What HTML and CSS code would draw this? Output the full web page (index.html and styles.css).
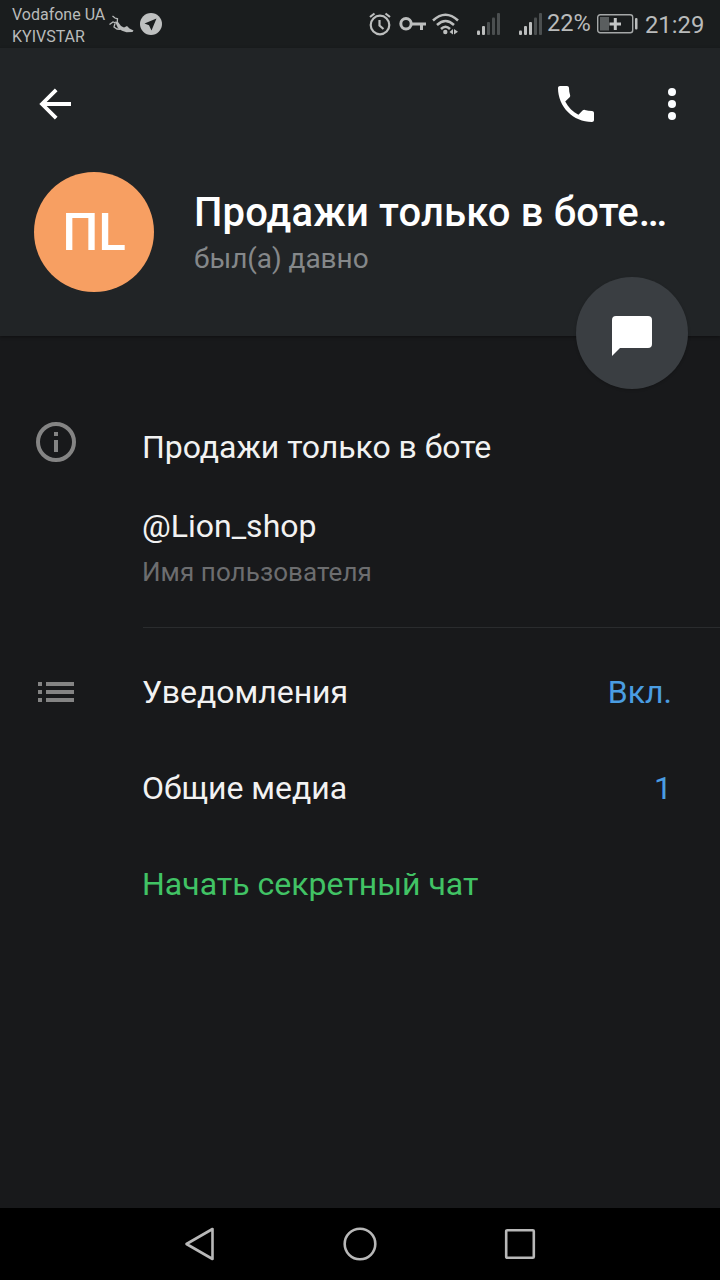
FILE: index.html
```html
<!DOCTYPE html>
<html lang="ru">
<head>
<meta charset="utf-8">
<title>Профиль</title>
<link rel="stylesheet" href="styles.css">
</head>
<body>
<div class="screen">
  <div class="statusbar">
    <div class="carriers"><span>Vodafone UA</span><span>KYIVSTAR</span></div>
    <svg class="runner" width="25" height="20" viewBox="0 0 25 20" fill="none" stroke="#b9bbbb" stroke-width="1.300">
      <path d="M3.500 1l2.500 2 2.500.8-.3 4M.5 9.500L4 7l3 1M6 8.500L5 12l3 2 3.500.3"/>
      <path d="M6 6.500l3 .5 3 4 3 1.500 3-1.500 2.500 2.500 4 2-1 1.500-6 .3-4.500-1.500-4-2.500z" fill="#b9bbbb" stroke="none"/>
    </svg>
    <svg class="telegram" width="22" height="22" viewBox="0 0 22 22">
      <circle cx="11" cy="11" r="11" fill="#bec0c0"/>
      <path d="M16.500 5.500L4.500 10.500 9 12.300 11.500 17.500z" fill="#1a1d1e"/>
    </svg>
    <div class="indicators">
      <svg class="alarm" width="22" height="24" viewBox="0 0 22 24" fill="none" stroke="#bcbebe" stroke-width="2.200">
        <circle cx="11" cy="13" r="9.300"/>
        <path d="M1 5L5.500 1.500M21 5L16.500 1.500M10.500 8v5.500l4 3.500"/>
      </svg>
      <svg class="key" width="27" height="14" viewBox="0 0 27 14" fill="none" stroke="#bcbebe" stroke-width="3">
        <circle cx="7" cy="6.700" r="5.200"/>
        <path d="M12 7h15M22.500 7v6"/>
      </svg>
      <svg class="wifi" width="27" height="22" viewBox="0 0 27 22" fill="none" stroke="#bcbebe" stroke-width="2.500">
        <path d="M1 7.500Q13.500-4 26 7.500M5 12q8.500-8 17 0M9 16q4.500-4.500 9 0"/>
        <circle cx="13.300" cy="19" r="2.200" fill="#bcbebe" stroke="none"/>
        <path d="M17.500 19l3.500-3v5.500zM22 16v5.500l4-2.700z" fill="#bcbebe" stroke="none"/>
      </svg>
      <svg class="signal first" width="24" height="22" viewBox="0 0 24 22" fill="#4b4f50">
        <rect x="0" y="17.500" width="3" height="4.500" rx="1" fill="#bcbebe"/>
        <rect x="5" y="13" width="3" height="9" rx="1" fill="#bcbebe"/>
        <rect x="10" y="9" width="3" height="13" rx="1"/>
        <rect x="15" y="4.500" width="3" height="17.500" rx="1"/>
        <rect x="20" y="0" width="3" height="22" rx="1"/>
      </svg>
      <svg class="signal second" width="24" height="22" viewBox="0 0 24 22" fill="#4b4f50">
        <rect x="0" y="17.500" width="3" height="4.500" rx="1" fill="#bcbebe"/>
        <rect x="5" y="13" width="3" height="9" rx="1" fill="#bcbebe"/>
        <rect x="10" y="9" width="3" height="13" rx="1" fill="#bcbebe"/>
        <rect x="15" y="4.500" width="3" height="17.500" rx="1"/>
        <rect x="20" y="0" width="3" height="22" rx="1"/>
      </svg>
      <span class="percent">22%</span>
      <svg class="battery" width="41" height="20" viewBox="0 0 41 20">
        <rect x=".7" y=".7" width="35" height="18" rx="2.500" fill="none" stroke="#a5a8a8" stroke-width="1.400"/>
        <rect x="3" y="3" width="9" height="13.500" fill="#5a5e5f"/>
        <path d="M18.300 4v12M12.500 10H24" stroke="#c4c6c6" stroke-width="3" fill="none"/>
        <rect x="38" y="4" width="2.500" height="11.500" rx="1" fill="#bcbebe"/>
      </svg>
      <span class="clock">21:29</span>
    </div>
  </div>

  <header class="header">
    <div class="toolbar">
      <svg width="32" height="32" viewBox="0 0 32 32" fill="none" stroke="#fff" stroke-width="3.800">
        <path d="M32 16H3M17.200 1.800L3 16l14.200 14.200"/>
      </svg>
      <svg class="phone" width="36" height="36" viewBox="3 3 18 18" fill="#fff">
        <path d="M6.620 10.790c1.440 2.830 3.760 5.140 6.590 6.590l2.200-2.200c.27-.27.67-.36 1.020-.24 1.120.37 2.330.57 3.570.57.550 0 1 .45 1 1V20c0 .55-.45 1-1 1-9.390 0-17-7.610-17-17 0-.55.45-1 1-1h3.500c.55 0 1 .45 1 1 0 1.250.2 2.450.57 3.570.11.350.030.740-.25 1.020l-2.200 2.200z"/>
      </svg>
      <svg width="8" height="32" viewBox="0 0 8 32" fill="#fbfdff">
        <circle cx="4" cy="4" r="4"/><circle cx="4" cy="16" r="4"/><circle cx="4" cy="28" r="4"/>
      </svg>
    </div>
    <div class="profile">
      <div class="avatar">ПL</div>
      <div class="names">
        <div class="title">Продажи только в боте…</div>
        <div class="status">был(а) давно</div>
      </div>
    </div>
    <div class="fab">
      <svg width="40" height="40" viewBox="0 0 40 40" fill="#fff">
        <path d="M4 0h32q4 0 4 4v24q0 4-4 4H8l-8 8V4q0-4 4-4z"/>
      </svg>
    </div>
  </header>

  <main class="content">
    <section class="info">
      <svg class="info-icon" width="40" height="40" viewBox="0 0 40 40">
        <circle cx="20" cy="20" r="18" fill="none" stroke="#848484" stroke-width="4"/>
        <path d="M18 10h4v4h-4zM18 18h4v12h-4z" fill="#848484"/>
      </svg>
      <div class="info-text">
        <div class="bio">Продажи только в боте</div>
        <div class="username">@Lion_shop</div>
        <div class="caption">Имя пользователя</div>
      </div>
    </section>
    <section class="settings">
      <svg class="list-icon" width="36" height="20" viewBox="0 0 36 20" fill="#848484">
        <path d="M0 0h4v4H0zM8 0h28v4H8zM0 8h4v4H0zM8 8h28v4H8zM0 16h4v4H0zM8 16h28v4H8z"/>
      </svg>
      <div class="rows">
        <div class="row"><span>Уведомления</span><span class="value">Вкл.</span></div>
        <div class="row"><span>Общие медиа</span><span class="value">1</span></div>
        <div class="row secret">Начать секретный чат</div>
      </div>
    </section>
  </main>

  <nav class="navbar">
    <svg width="34" height="34" viewBox="0 0 34 34"><path d="M29.500 2v30L3.500 17z"/></svg>
    <svg width="34" height="34" viewBox="0 0 34 34"><circle cx="17" cy="17" r="15.300"/></svg>
    <svg width="34" height="34" viewBox="0 0 34 34"><rect x="3.200" y="3.200" width="27.600" height="27.600" rx="1"/></svg>
  </nav>
</div>
</body>
</html>
```
FILE: styles.css
```css
body {
  margin: 0;
  background: #18191b;
  font-family: Roboto, "Noto Sans", sans-serif;
}
svg { display: block; flex: none; }
.screen {
  width: 720px;
  height: 1280px;
  display: flex;
  flex-direction: column;
  overflow: hidden;
  white-space: nowrap;
}
.statusbar {
  height: 48px;
  flex: none;
  display: flex;
  align-items: flex-start;
  box-sizing: border-box;
  padding-left: 12px;
  background: #1a1d1e;
  color: #b9bbbb;
}
.carriers {
  display: flex;
  flex-direction: column;
  width: 97px;
  padding-top: 4px;
  font-size: 16px;
  line-height: 21.5px;
}
.runner { margin-top: 15px; }
.telegram { margin: 13px 0 0 6px; }
.indicators {
  display: flex;
  margin-left: 207px;
}
.alarm { margin-top: 12px; }
.key { margin: 17px 0 0 8px; }
.wifi { margin: 13px 0 0 6px; }
.signal { margin-top: 13px; }
.first { margin-left: 18px; }
.second { margin-left: 18px; }
.percent {
  width: 50px;
  margin-left: 4px;
  font-size: 23.6px;
  line-height: 47px;
}
.battery { margin-top: 14px; }
.clock {
  margin-left: 7px;
  font-size: 23.8px;
  line-height: 50px;
}
.header {
  position: relative;
  z-index: 1;
  height: 288px;
  flex: none;
  background: #212426;
  box-shadow: 0 1px 3px rgba(0, 0, 0, .4);
}
.toolbar {
  height: 112px;
  display: flex;
  align-items: center;
  padding: 0 44px 0 39px;
}
.phone { margin: 0 74px 0 auto; }
.profile {
  display: flex;
  padding: 12px 0 0 34px;
}
.avatar {
  width: 120px;
  height: 120px;
  border-radius: 50%;
  background: #f79f62;
  color: #fff;
  font-size: 51px;
  font-weight: 500;
  line-height: 121px;
  text-align: center;
}
.names { margin-left: 40px; padding-top: 17px; }
.title {
  color: #fff;
  font-size: 40px;
  font-weight: 500;
  letter-spacing: .15px;
  line-height: 48px;
}
.status {
  color: #85888a;
  font-size: 28px;
  letter-spacing: -.05px;
  line-height: 44px;
}
.fab {
  position: absolute;
  right: 32px;
  bottom: -53px;
  width: 112px;
  height: 112px;
  display: flex;
  align-items: center;
  justify-content: center;
  padding-top: 6px;
  box-sizing: border-box;
  border-radius: 50%;
  background: #3a3e42;
  box-shadow: 0 1px 3px rgba(0, 0, 0, .2);
}
.content {
  flex: 1;
  color: #f2f2f2;
  font-size: 32px;
}
.info {
  display: flex;
  padding: 86px 0 0 36px;
}
.info-text {
  flex: 1;
  height: 205px;
  margin-left: 67px;
  border-bottom: 1px solid #2a2c2e;
}
.bio, .username, .caption { margin-left: -1px; }
.bio { line-height: 50px; letter-spacing: -.05px; }
.username { margin-top: 34px; line-height: 40px; }
.caption {
  color: #6c6d6f;
  font-size: 26px;
  letter-spacing: .07px;
  line-height: 53px;
}
.settings {
  display: flex;
  padding: 16px 48px 0 38px;
}
.list-icon { margin-top: 38px; }
.rows { flex: 1; margin-left: 68px; }
.row {
  display: flex;
  justify-content: space-between;
  line-height: 96px;
}
.value { color: #4a9de2; }
.secret { color: #41c365; }
.navbar {
  height: 72px;
  flex: none;
  display: flex;
  align-items: center;
  justify-content: center;
  gap: 126px;
  background: #000;
}
.navbar svg {
  fill: none;
  stroke: #b8b8b8;
  stroke-width: 2.6;
  stroke-linejoin: round;
}
```
